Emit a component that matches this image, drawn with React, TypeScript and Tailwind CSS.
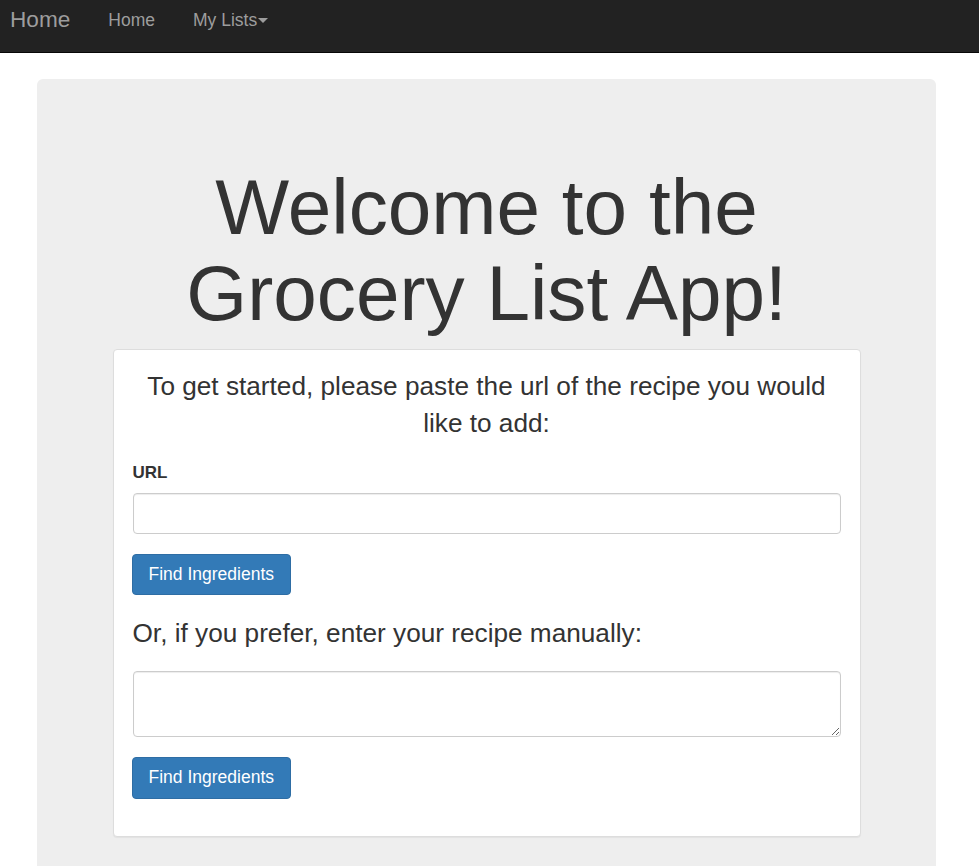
export default function App() {
  return (
    <div className="min-h-screen bg-white text-[#333] font-['Liberation_Sans',Helvetica,Arial,sans-serif]">
      {/* Navbar */}
      <nav className="h-[53px] bg-[#222] border-b border-[#080808] flex items-start pt-[8px]">
        <a className="pl-[10px] text-[22.6px] leading-[24px] text-[#9d9d9d]">Home</a>
        <div className="flex ml-[38px] gap-[38px]">
          <a className="text-[17.5px] leading-[24px] text-[#9d9d9d]">Home</a>
          <a className="text-[17.5px] leading-[24px] text-[#9d9d9d] flex items-center">
            My Lists
            <span className="ml-[1px] w-0 h-0 border-t-[5px] border-t-[#9d9d9d] border-x-[5px] border-x-transparent" />
          </a>
        </div>
      </nav>

      {/* Jumbotron */}
      <div className="ml-[37px] mt-[26px] w-[899px] bg-[#eee] rounded-[6px] pt-[85px] pb-[48px]">
        <h1 className="text-center text-[78.3px] leading-[86px] font-normal text-[#333]">
          Welcome to the
          <br />
          Grocery List App!
        </h1>

        <div className="mx-auto mt-[13px] w-[748px] bg-white border border-[#ddd] rounded-[4px] shadow-[0_1px_1px_rgba(0,0,0,0.05)] px-[19px] pt-[18px] pb-[37px]">
          <p className="text-center text-[26.2px] leading-[37px]">
            To get started, please paste the url of the recipe you would like to add:
          </p>

          <label className="block mt-[19px] text-[17px] leading-[24px] font-bold">URL</label>
          <input
            type="text"
            className="block mt-[8px] w-full h-[41px] border border-[#ccc] rounded-[4px] px-3 text-[17px] shadow-[inset_0_1px_1px_rgba(0,0,0,0.075)] outline-none"
          />
          <button className="-ml-px mt-[20px] h-[41px] px-4 bg-[#337ab7] border border-[#2e6da4] rounded-[4px] text-white text-[17.5px] leading-none">
            Find Ingredients
          </button>

          <p className="mt-[20px] text-[26.2px] leading-[37px]">Or, if you prefer, enter your recipe manually:</p>
          <textarea className="block mt-[19px] w-full h-[66px] border border-[#ccc] rounded-[4px] px-3 py-2 text-[17px] shadow-[inset_0_1px_1px_rgba(0,0,0,0.075)] outline-none" />
          <button className="-ml-px mt-[20px] h-[42px] px-4 bg-[#337ab7] border border-[#2e6da4] rounded-[4px] text-white text-[17.5px] leading-none">
            Find Ingredients
          </button>
        </div>
      </div>
    </div>
  );
}
